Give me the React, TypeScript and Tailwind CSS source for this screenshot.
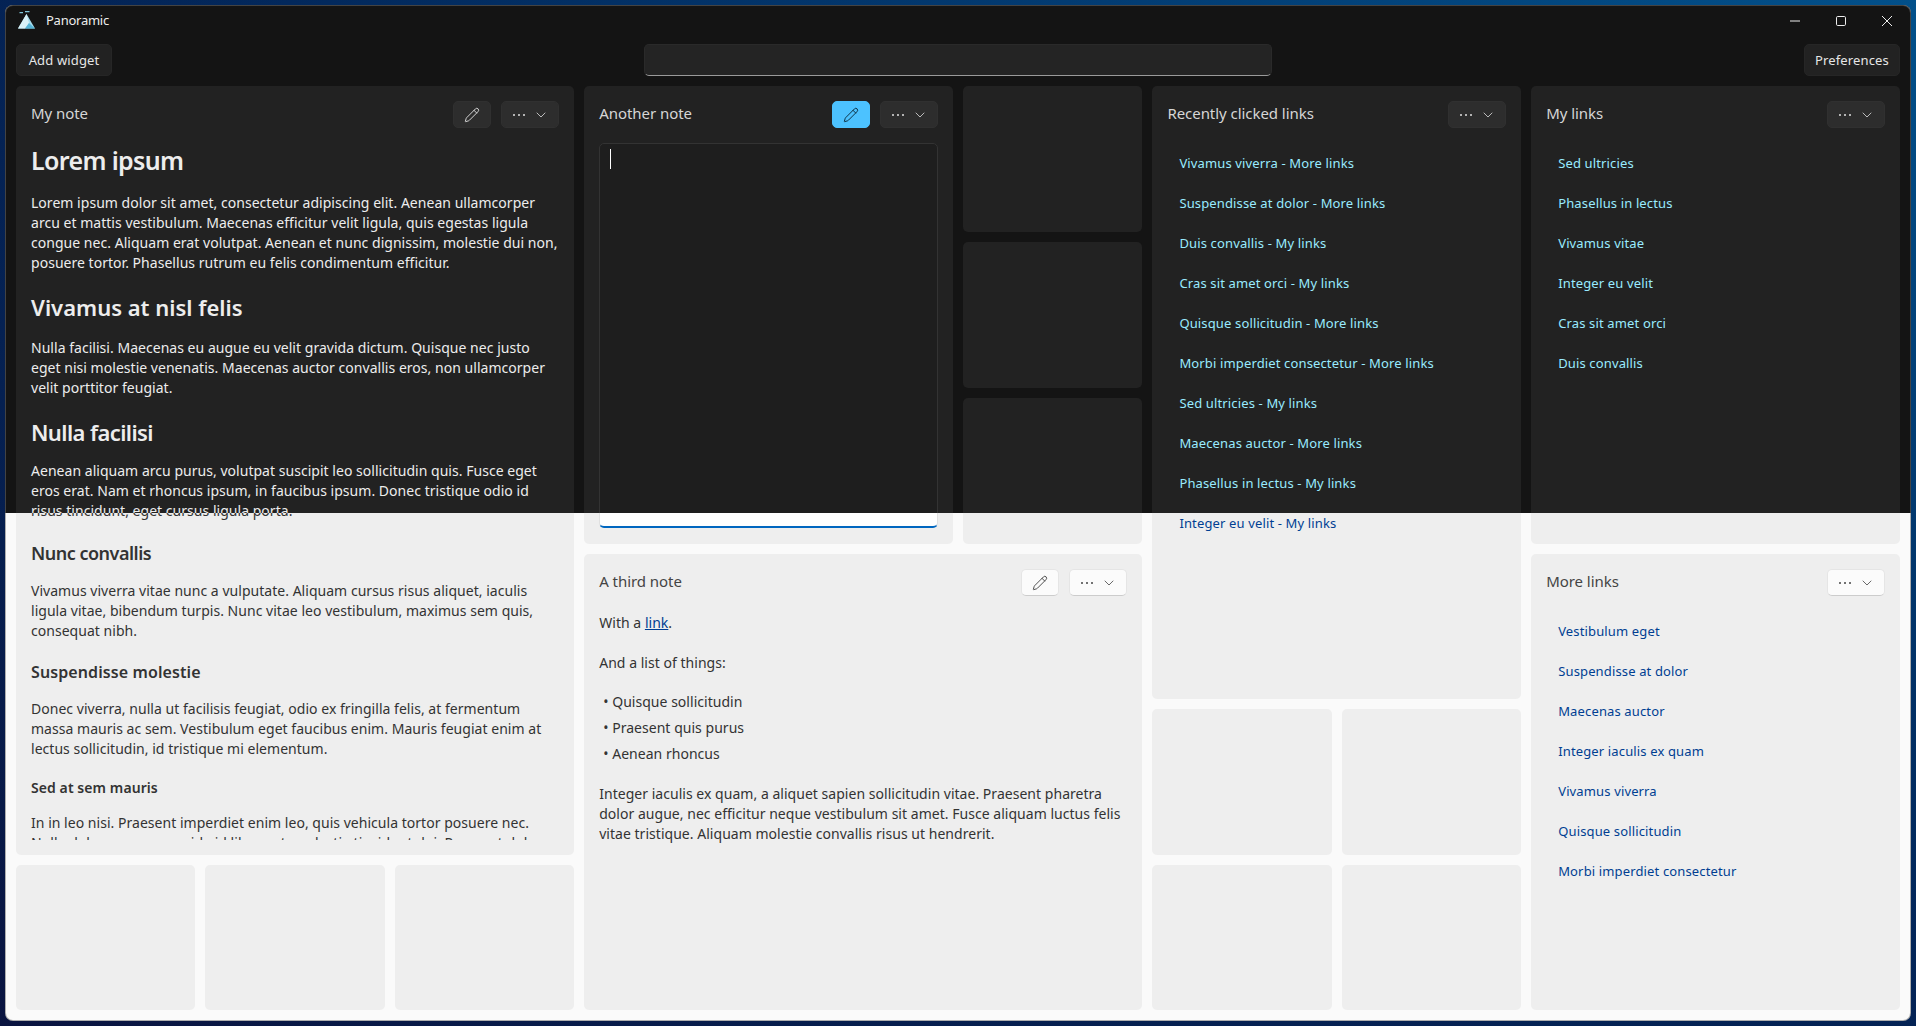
import { ChevronDown, Pencil } from "lucide-react"

const recentLinks = [
    "Vivamus viverra - More links",
    "Suspendisse at dolor - More links",
    "Duis convallis - My links",
    "Cras sit amet orci - My links",
    "Quisque sollicitudin - More links",
    "Morbi imperdiet consectetur - More links",
    "Sed ultricies - My links",
    "Maecenas auctor - More links",
    "Phasellus in lectus - My links",
]

const myLinks = ["Sed ultricies", "Phasellus in lectus", "Vivamus vitae", "Integer eu velit", "Cras sit amet orci", "Duis convallis"]

const moreLinks = [
    "Vestibulum eget",
    "Suspendisse at dolor",
    "Maecenas auctor",
    "Integer iaculis ex quam",
    "Vivamus viverra",
    "Quisque sollicitudin",
    "Morbi imperdiet consectetur",
]

// each copy of the window only shows the text of its own half
const themes = {
    dark: {
        window: "bg-[#141414] border-white/20 text-[#ededed]",
        card: "bg-[#222222]",
        title: "text-[#d6d6d6]",
        button: "bg-[#2d2d2d] border-[#303030] text-[#e0e0e0]",
        toolButton: "bg-[#222222] border-[#262626] text-[#e6e6e6]",
        search: "bg-[#242424] border-[#2a2a2a] border-b-[#9a9a9a]",
        link: "text-[#99ebff]",
        editor: "bg-[#1e1e1e] border-[#333333] border-b-[#333333]",
        iconActive: "bg-[#4cc2ff] border-[#4cc2ff] text-[#0b2a3a]",
        top: "",
        bottom: "invisible",
    },
    light: {
        window: "bg-[#fafafa] border-black/30 text-[#333333]",
        card: "bg-[#eeeeee]",
        title: "text-[#444444]",
        button: "bg-[#fbfbfb] border-[#e5e5e5] border-b-[#cccccc] text-[#444444]",
        toolButton: "bg-[#fbfbfb] border-[#e5e5e5] border-b-[#cccccc] text-[#333333]",
        search: "bg-white border-[#e5e5e5] border-b-[#888888]",
        link: "text-[#003e92]",
        editor: "bg-white border-[#e0e0e0] border-b-2 border-b-[#0067c0]",
        iconActive: "bg-[#0067c0] border-[#0067c0] text-white",
        top: "invisible",
        bottom: "",
    },
}

type Theme = (typeof themes)["dark"]

function Logo() {
    return (
        <svg width="20" height="20" viewBox="0 0 20 20" className="shrink-0">
            <path d="M9.5 3 L18 17.5 H1 Z" fill="#a5dcec" />
            <path d="M9.5 3 L12 12 L8 17.5 H1 Z" fill="#d8f1f7" />
            <path d="M12 12 L18 17.5 H8 Z" fill="#55b4d6" />
            <path d="M2.5 1.6 H6 M8 0.6 H12.5" stroke="#7fc4d8" strokeWidth="1.2" />
        </svg>
    )
}

function WindowControls() {
    return (
        <div className="flex">
            <div className="w-[46px] h-[30px] flex items-center justify-center">
                <svg width="10" height="10" viewBox="0 0 10 10"><path d="M0 5 H10" stroke="currentColor" strokeWidth="1" /></svg>
            </div>
            <div className="w-[46px] h-[30px] flex items-center justify-center">
                <svg width="10" height="10" viewBox="0 0 10 10"><rect x="0.5" y="0.5" width="9" height="9" rx="1.2" fill="none" stroke="currentColor" /></svg>
            </div>
            <div className="w-[46px] h-[30px] flex items-center justify-center">
                <svg width="10" height="10" viewBox="0 0 10 10"><path d="M0 0 L10 10 M10 0 L0 10" stroke="currentColor" strokeWidth="1" /></svg>
            </div>
        </div>
    )
}

function Dots() {
    return (
        <svg width="12" height="4" viewBox="0 0 12 4">
            <circle cx="1" cy="2" r="1" fill="currentColor" />
            <circle cx="6" cy="2" r="1" fill="currentColor" />
            <circle cx="11" cy="2" r="1" fill="currentColor" />
        </svg>
    )
}

function Card({
    theme,
    title,
    className,
    hide,
    onEdit,
    active,
    children,
}: {
    theme: Theme
    title: string
    className: string
    hide: string
    onEdit?: boolean
    active?: boolean
    children: React.ReactNode
}) {
    return (
        <section className={`${className} ${theme.card} rounded-[5px] flex flex-col min-h-0 overflow-hidden`}>
            <header className={`flex items-center h-[27px] mt-[15px] mb-[15px] px-[15px] shrink-0 ${hide}`}>
                <h2 className={`flex-1 pb-[2px] text-[15px] tracking-[-0.05px] ${theme.title}`}>{title}</h2>
                {onEdit && (
                    <div className={`w-[38px] h-[27px] mr-[10px] rounded-[5px] border flex items-center justify-center ${active ? theme.iconActive : theme.button}`}>
                        <Pencil size={16} strokeWidth={1.4} />
                    </div>
                )}
                <div className={`w-[58px] h-[27px] pl-[2px] rounded-[5px] border flex items-center justify-center gap-[8px] ${theme.button}`}>
                    <Dots />
                    <ChevronDown size={16} strokeWidth={1.2} />
                </div>
            </header>
            {children}
        </section>
    )
}

function Tile({ theme }: { theme: Theme }) {
    return <div className={`${theme.card} rounded-[5px]`} />
}

function Para({ lines, className = "" }: { lines: string[]; className?: string }) {
    return (
        <p className={`text-[14px] leading-[20px] tracking-[0.03px] ${className}`}>
            {lines.map((l) => (
                <span key={l} className="block whitespace-nowrap">{l}</span>
            ))}
        </p>
    )
}

function LinkList({ theme, links, hide, extra }: { theme: Theme; links: string[]; hide: string; extra?: string }) {
    return (
        <ul className="px-[15px] pt-px">
            {links.map((l) => (
                <li key={l} className={`h-10 flex items-center pl-[12px] text-[13px] tracking-[0.14px] ${theme.link} ${hide}`}>{l}</li>
            ))}
            {extra && (
                <li className={`h-10 flex items-center pl-[12px] text-[13px] tracking-[0.14px] ${theme.link} ${theme.bottom}`}>{extra}</li>
            )}
        </ul>
    )
}

function MyNote({ theme }: { theme: Theme }) {
    return (
        <Card theme={theme} title="My note" hide={theme.top} onEdit className="col-span-3 row-span-5">
            <div className="flex-1 min-h-0 mb-[15px] px-[15px] overflow-hidden">
                <div className={theme.top}>
                    <h1 className="text-[25px] leading-[34px] font-semibold tracking-[-0.65px] mb-[16px]">Lorem ipsum</h1>
                    <Para lines={[
                        "Lorem ipsum dolor sit amet, consectetur adipiscing elit. Aenean ullamcorper",
                        "arcu et mattis vestibulum. Maecenas efficitur velit ligula, quis egestas ligula",
                        "congue nec. Aliquam erat volutpat. Aenean et nunc dignissim, molestie dui non,",
                        "posuere tortor. Phasellus rutrum eu felis condimentum efficitur.",
                    ]} />
                    <h2 className="text-[22px] leading-[30px] font-semibold mt-[19px] mb-[16px]">Vivamus at nisl felis</h2>
                    <Para lines={[
                        "Nulla facilisi. Maecenas eu augue eu velit gravida dictum. Quisque nec justo",
                        "eget nisi molestie venenatis. Maecenas auctor convallis eros, non ullamcorper",
                        "velit porttitor feugiat.",
                    ]} />
                    <h2 className="text-[22px] leading-[30px] font-semibold tracking-[-0.6px] mt-[19px] mb-[14px]">Nulla facilisi</h2>
                    <Para lines={[
                        "Aenean aliquam arcu purus, volutpat suscipit leo sollicitudin quis. Fusce eget",
                        "eros erat. Nam et rhoncus ipsum, in faucibus ipsum. Donec tristique odio id",
                    ]} />
                </div>
                <Para lines={["risus tincidunt, eget cursus ligula porta."]} />
                <div className={theme.bottom}>
                    <h3 className="text-[18px] leading-[26px] font-semibold tracking-[-0.5px] mt-[19px] mb-[15px]">Nunc convallis</h3>
                    <Para lines={[
                        "Vivamus viverra vitae nunc a vulputate. Aliquam cursus risus aliquet, iaculis",
                        "ligula vitae, bibendum turpis. Nunc vitae leo vestibulum, maximus sem quis,",
                        "consequat nibh.",
                    ]} />
                    <h4 className="text-[16px] leading-[22px] font-semibold tracking-[0.1px] mt-[20px] mb-[16px]">Suspendisse molestie</h4>
                    <Para lines={[
                        "Donec viverra, nulla ut facilisis feugiat, odio ex fringilla felis, at fermentum",
                        "massa mauris ac sem. Vestibulum eget faucibus enim. Mauris feugiat enim at",
                        "lectus sollicitudin, id tristique mi elementum.",
                    ]} />
                    <h5 className="text-[14px] leading-[18px] font-semibold tracking-[0.08px] mt-[20px] mb-[16px]">Sed at sem mauris</h5>
                    <Para lines={[
                        "In in leo nisi. Praesent imperdiet enim leo, quis vehicula tortor posuere nec.",
                        "Nulla dolor magna, gravida id libero ut, molestie tincidunt dui. Praesent dolor",
                    ]} />
                </div>
            </div>
        </Card>
    )
}

function AnotherNote({ theme, dark }: { theme: Theme; dark: boolean }) {
    return (
        <Card theme={theme} title="Another note" hide={theme.top} onEdit active className="col-span-2 row-span-3">
            <div className="flex-1 min-h-0 mb-[16px] mx-[15px]">
                <div className={`h-full rounded-[5px] border pl-[10px] pt-[5px] ${theme.editor}`}>
                    {dark && <div className="w-px h-[20px] bg-white" />}
                </div>
            </div>
        </Card>
    )
}

function ThirdNote({ theme }: { theme: Theme }) {
    return (
        <Card theme={theme} title="A third note" hide={theme.bottom} onEdit className="col-span-3 row-span-3">
            <div className={`px-[15px] pt-[2px] text-[14px] leading-[20px] tracking-[0.03px] ${theme.bottom}`}>
                <p>With a <a className={`underline ${theme.link}`}>link</a>.</p>
                <p className="mt-[20px]">And a list of things:</p>
                <ul className="mt-[16px]">
                    {["Quisque sollicitudin", "Praesent quis purus", "Aenean rhoncus"].map((item) => (
                        <li key={item} className="flex h-[26px] items-center pl-[4px]">
                            <span className="w-[9px]">•</span>
                            {item}
                        </li>
                    ))}
                </ul>
                <Para className="mt-[17px]" lines={[
                    "Integer iaculis ex quam, a aliquet sapien sollicitudin vitae. Praesent pharetra",
                    "dolor augue, nec efficitur neque vestibulum sit amet. Fusce aliquam luctus felis",
                    "vitae tristique. Aliquam molestie convallis risus ut hendrerit.",
                ]} />
            </div>
        </Card>
    )
}

function Panoramic({ dark }: { dark: boolean }) {
    const theme = dark ? themes.dark : themes.light
    return (
        <div className={`w-[1906px] h-[1016px] ml-[5px] mt-[5px] rounded-[8px] border flex flex-col overflow-hidden ${theme.window}`}>
            <div className={`flex items-start h-[38px] shrink-0 ${theme.top}`}>
                <div className="flex items-center h-[30px] pl-[11px] gap-[9px]">
                    <Logo />
                    <span className="text-[13px] tracking-[-0.25px]">Panoramic</span>
                </div>
                <div className="flex-1" />
                <WindowControls />
            </div>
            <div className={`flex justify-between items-center h-[32px] px-[10px] shrink-0 ${theme.top}`}>
                <div className={`w-[96px] h-[32px] pt-px rounded-[5px] border flex items-center justify-center text-[13px] tracking-[0.14px] ${theme.toolButton}`}>Add widget</div>
                <div className={`w-[628px] h-[32px] rounded-[5px] border ${theme.search}`} />
                <div className={`w-[96px] h-[32px] pt-px rounded-[5px] border flex items-center justify-center text-[13px] tracking-[0.14px] ${theme.toolButton}`}>Preferences</div>
            </div>
            <main className="grid grid-cols-10 grid-rows-[146px_146px_146px_145px_146px_145px] gap-[10px] px-[10px] mt-[10px]">
                <MyNote theme={theme} />
                <AnotherNote theme={theme} dark={dark} />
                <div className="col-span-1 row-span-3 grid grid-rows-subgrid gap-[10px]">
                    <Tile theme={theme} />
                    <Tile theme={theme} />
                    <Tile theme={theme} />
                </div>
                <Card theme={theme} title="Recently clicked links" hide={theme.top} className="col-span-2 row-span-4">
                    <LinkList theme={theme} links={recentLinks} hide={theme.top} extra="Integer eu velit - My links" />
                </Card>
                <Card theme={theme} title="My links" hide={theme.top} className="col-span-2 row-span-3">
                    <LinkList theme={theme} links={myLinks} hide={theme.top} />
                </Card>
                <ThirdNote theme={theme} />
                <Card theme={theme} title="More links" hide={theme.bottom} className="col-start-9 col-span-2 row-start-4 row-span-3">
                    <LinkList theme={theme} links={moreLinks} hide={theme.bottom} />
                </Card>
                <div className="col-span-3 row-start-6 grid grid-cols-3 gap-[10px]">
                    <Tile theme={theme} />
                    <Tile theme={theme} />
                    <Tile theme={theme} />
                </div>
                <div className="col-start-7 col-span-2 row-start-5 row-span-2 grid grid-cols-2 grid-rows-subgrid gap-[10px]">
                    <Tile theme={theme} />
                    <Tile theme={theme} />
                    <Tile theme={theme} />
                    <Tile theme={theme} />
                </div>
            </main>
        </div>
    )
}

export default function App() {
    return (
        <div className="relative w-[1916px] h-[1026px] overflow-hidden font-['Noto_Sans',sans-serif] bg-[radial-gradient(ellipse_at_top_right,#02508a,#02285c_60%,#0a1440)] flow-root">
            <Panoramic dark={false} />
            {/* dark half of the theme comparison, laid over the light window */}
            <div className="absolute left-0 top-0 w-full h-[513px] overflow-hidden">
                <Panoramic dark />
            </div>
        </div>
    )
}
